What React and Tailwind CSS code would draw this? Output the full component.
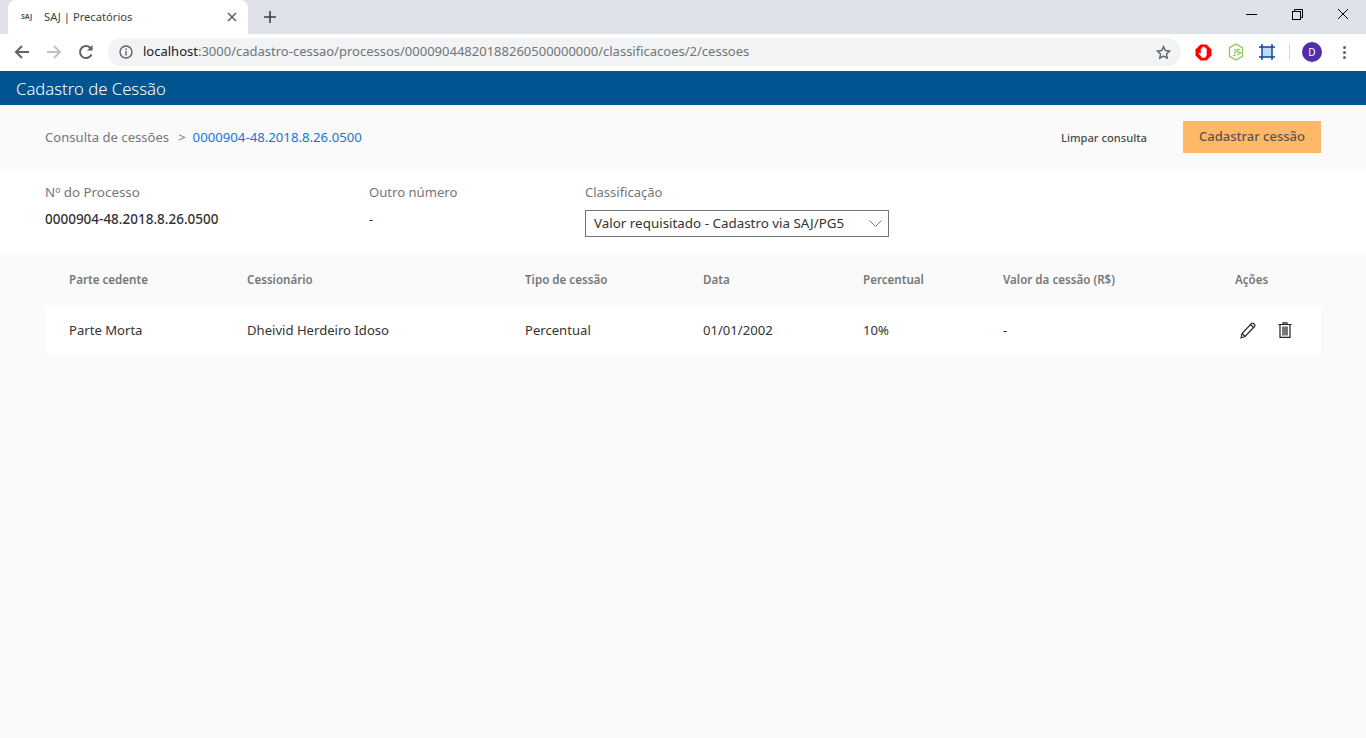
const font = { fontFamily: '"Noto Sans", sans-serif' };

const columns = "grid grid-cols-[178px_278px_178px_160px_140px_232px_1fr] px-6";

const headers = ["Parte cedente", "Cessionário", "Tipo de cessão", "Data", "Percentual", "Valor da cessão (R$)", "Ações"];
const row = ["Parte Morta", "Dheivid Herdeiro Idoso", "Percentual", "01/01/2002", "10%", "-"];

const ChromeBar = () => (
  <div className="font-['Liberation_Sans',sans-serif]">
    <div className="h-[34px] bg-[#dee1e7] flex items-end relative">
      <div className="ml-2 w-[240px] h-[34px] bg-white rounded-t-lg flex items-center">
        <span className="ml-[13px] w-[23px] text-[7px] font-bold text-[#555] font-['Noto_Sans',sans-serif]">SAJ</span>
        <span className="text-[11.2px] text-[#3c4043] font-['Noto_Sans',sans-serif]">SAJ | Precatórios</span>
        <svg className="ml-auto mr-[11px]" width="10" height="10" viewBox="0 0 10 10" stroke="#5f6368" strokeWidth="1.6">
          <path d="M1 1l8 8M9 1l-8 8" />
        </svg>
      </div>
      <svg className="ml-4 mb-[11px]" width="12" height="12" viewBox="0 0 12 12" stroke="#3c4043" strokeWidth="1.6">
        <path d="M6 0v12M0 6h12" />
      </svg>
      <div className="ml-auto flex items-center h-[28px] self-start">
        <div className="w-[46px] flex justify-center">
          <div className="w-[11px] h-px bg-black" />
        </div>
        <div className="w-[46px] flex justify-center">
          <svg width="11" height="11" viewBox="0 0 11 11" fill="none" stroke="#000">
            <path d="M2.500 2.500v-2h8v8h-2" />
            <rect x="0.500" y="2.500" width="8" height="8" />
          </svg>
        </div>
        <div className="w-[46px] flex justify-center">
          <svg width="12" height="12" viewBox="0 0 12 12" stroke="#000">
            <path d="M1 1l10 10M11 1l-10 10" />
          </svg>
        </div>
      </div>
    </div>
    <div className="h-[37px] bg-white flex items-center pb-px">
      <svg className="ml-[14px]" width="16" height="16" viewBox="0 0 16 16" fill="none" stroke="#5f6368" strokeWidth="2">
        <path d="M15 8H2M8 2L2 8l6 6" />
      </svg>
      <svg className="ml-4" width="16" height="16" viewBox="0 0 16 16" fill="none" stroke="#bdc1c6" strokeWidth="2">
        <path d="M1 8h13M8 2l6 6-6 6" />
      </svg>
      <svg className="ml-4" width="16" height="16" viewBox="0 0 16 16" fill="none" stroke="#5f6368" strokeWidth="2">
        <path d="M13.500 10.500A6 6 0 1 1 12.200 3.800L14 5.500" />
        <path d="M14.500 1v5.500H9" fill="#5f6368" stroke="none" />
      </svg>
      <div className="ml-[14px] w-[1073px] h-7 rounded-full bg-[#f1f3f4] flex items-center">
        <svg className="ml-[11px]" width="14" height="14" viewBox="0 0 14 14" fill="none" stroke="#5f6368" strokeWidth="1.400">
          <circle cx="7" cy="7" r="6" />
          <path d="M7 6v4.500M7 3.400v1.500" />
        </svg>
        <span className="ml-[10px] text-[13px] text-[#70757a] font-['Noto_Sans',sans-serif]">
          <span className="text-[#202124]">localhost</span>:3000/cadastro-cessao/processos/00009044820188260500000000/classificacoes/2/cessoes
        </span>
        <svg className="ml-auto mr-[10px]" width="15" height="15" viewBox="0 0 24 24" fill="none" stroke="#5f6368" strokeWidth="2.200">
          <path d="M12 2.500l2.900 6.300 6.900.8-5.100 4.700 1.400 6.800-6.100-3.400-6.100 3.400 1.400-6.800-5.100-4.700 6.900-.8z" />
        </svg>
      </div>
      <svg className="ml-[14px]" width="17" height="17" viewBox="0 0 17 17">
        <path d="M5.500 0.500h6l5 5v6l-5 5h-6l-5-5v-6z" fill="#f00" />
        <path d="M3.500 9.500l1.300-.8 1 1V4.500h1.200V3.200h1.200V2.800h1.200v.8h1.200v1h1.100V11l-1.500 2.800H7.200L3.500 9.500z" fill="#fff" />
      </svg>
      <svg className="ml-4" width="16" height="18" viewBox="0 0 16 18" fill="none" stroke="#8cc84b" strokeWidth="1.200">
        <path d="M8 1l6.500 3.700v8.600L8 17l-6.500-3.700V4.700z" />
        <path d="M7 6v5.500q0 1.500-2 1M12 7q-3-1.500-3 .5t3 2-3 2.500" />
      </svg>
      <svg className="ml-[15px]" width="16" height="16" viewBox="0 0 16 16" fill="none">
        <rect x="3" y="3" width="10" height="10" fill="#bbdefb" />
        <path d="M3 0v16M13 0v16M0 3h16M0 13h16" stroke="#0d47a1" strokeWidth="1.500" />
      </svg>
      <div className="ml-[14px] w-px h-4 bg-[#d5d7da]" />
      <div className="ml-3 w-5 h-5 rounded-full bg-[#512da8] text-white text-[10px] flex items-center justify-center font-['Noto_Sans',sans-serif]">D</div>
      <div className="ml-[21px] flex flex-col gap-[2px]">
        <div className="w-[3px] h-[3px] rounded-full bg-[#5f6368]" />
        <div className="w-[3px] h-[3px] rounded-full bg-[#5f6368]" />
        <div className="w-[3px] h-[3px] rounded-full bg-[#5f6368]" />
      </div>
    </div>
  </div>
);

const App = () => (
  <div className="h-[738px] overflow-hidden bg-[#fafafa] flex flex-col" style={font}>
    <ChromeBar />
    <div className="h-[34px] bg-[#00548f] flex items-center px-4 pt-0.5">
      <h1 className="text-[16.7px] font-light text-white">Cadastro de Cessão</h1>
    </div>

    <div className="h-16 flex items-center px-[45px] pt-0.5">
      <span className="text-[13.1px] text-[#777]">Consulta de cessões</span>
      <span className="text-[13px] text-[#777] ml-[9px]">&gt;</span>
      <span className="text-[13.2px] text-[#1976d2] ml-[7px]">0000904-48.2018.8.26.0500</span>
      <button className="ml-auto text-[11.2px] font-medium text-[#4a4a4a]">Limpar consulta</button>
      <button className="ml-9 w-[138px] h-8 -mt-0.5 bg-[#ffb868] text-[13px] font-medium text-[#555]">Cadastrar cessão</button>
    </div>

    <div className="h-[84px] bg-white flex px-[45px] pt-[13px]">
      <div className="w-[324px]">
        <div className="text-[13.4px] leading-5 text-[#777]">Nº do Processo</div>
        <div className="mt-[7px] text-[13.5px] leading-5 font-medium text-[#333]">0000904-48.2018.8.26.0500</div>
      </div>
      <div className="w-[216px]">
        <div className="text-[13.1px] leading-5 text-[#777]">Outro número</div>
        <div className="mt-[7px] text-[13px] leading-5 text-[#333]">-</div>
      </div>
      <div>
        <div className="text-[13px] leading-5 text-[#777]">Classificação</div>
        <div className="mt-2 w-[304px] h-[27px] border border-[#757575] flex items-center pl-2 pr-1.5 text-[13.4px] text-[#333]">
          Valor requisitado - Cadastro via SAJ/PG5
          <svg className="ml-auto" width="13" height="7" viewBox="0 0 13 7" fill="none" stroke="#777">
            <path d="M0.500 0.500L6.500 6.500l6-6" />
          </svg>
        </div>
      </div>
    </div>

    <div className="px-[45px]">
      <div className={`${columns} h-[52px] pt-0.5 items-center text-[11.6px] font-semibold text-[#777]`}>
        {headers.map((h) => (
          <div key={h}>{h}</div>
        ))}
      </div>
      <div className={`${columns} h-[50px] pt-0.5 items-center bg-white text-[13.1px] text-[#333]`}>
        {row.map((c) => (
          <div key={c}>{c}</div>
        ))}
        <div className="flex items-center gap-[22px] pl-[5px] -mt-0.5">
          <svg width="16" height="17" viewBox="0 0 16 17" fill="none" stroke="#222" strokeWidth="1.100">
            <path d="M1 16l1-4.500L11.500 1.500q1-1 2 0l1 1q1 1 0 2L5 14.500z" />
            <path d="M2 11.500l3 3M10.500 2.500l3 3" />
          </svg>
          <svg width="14" height="16" viewBox="0 0 14 16" fill="none" stroke="#222" strokeWidth="1.200">
            <path d="M0.500 2.500h13M5 2.500V0.800h4v1.700" />
            <path d="M2 2.500v12.800h10V2.500" />
            <rect x="4" y="4.500" width="6" height="9" fill="#777" stroke="none" />
          </svg>
        </div>
      </div>
    </div>
  </div>
);

export default App;
